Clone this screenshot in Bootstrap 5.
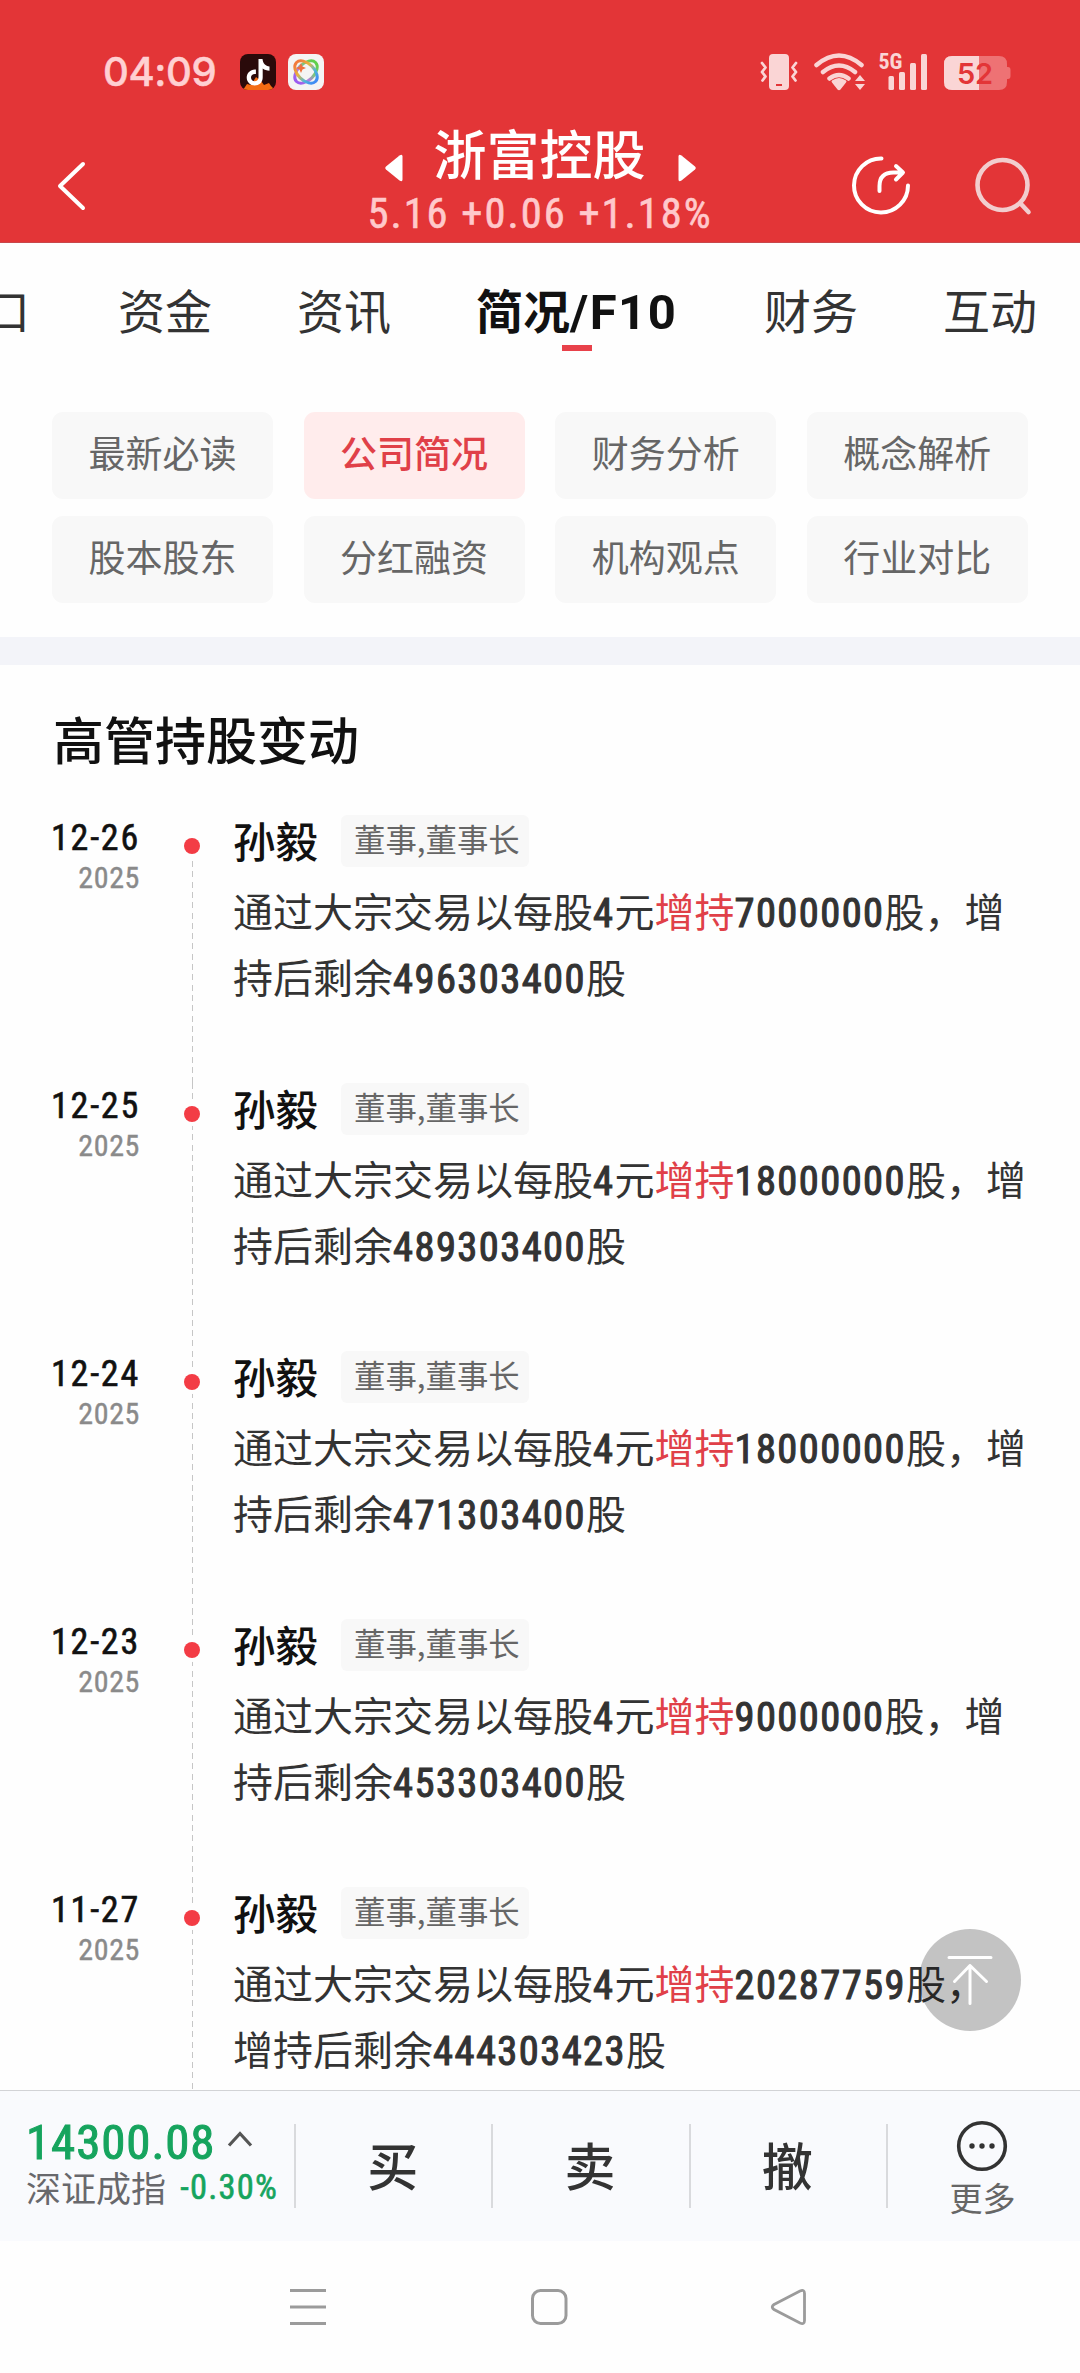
<!DOCTYPE html>
<html lang="zh-CN">
<head>
<meta charset="utf-8">
<meta name="viewport" content="width=device-width, initial-scale=1">
<title>浙富控股</title>
<link href="https://cdn.jsdelivr.net/npm/bootstrap@5.3.0/dist/css/bootstrap.min.css" rel="stylesheet">
<style>
  body { font-family: "Noto Sans CJK SC", "Noto Sans", sans-serif; background: #fefefe; color: #333; }
  .phone { width: 1080px; height: 2373px; background: #fefefe; }
  .num { font-family: "Roboto Condensed", Roboto, sans-serif; font-weight: 400; line-height: 1; -webkit-text-stroke: .6px currentColor; }
  .fw-mid { font-weight: 500; }

  .top-area { height: 243px; background: #e33537; border-bottom: 1px solid #c8474b; }
  .status-bar { height: 96px; padding: 48px 68px 0 103px; color: #ffd0d2; }
  .clock { font-family: Inter, sans-serif; font-weight: 500; font-size: 40px; line-height: 48px; width: 137px; letter-spacing: -.4px; -webkit-text-stroke: .5px currentColor; }
  .title-bar { height: 146px; padding: 0 44px 0 52px; }
  .headline { top: 25px; }
  .stock-name { font-size: 53px; line-height: 60px; color: #fff; }
  .quote { font-size: 42.5px; line-height: 42px; color: #ffc9cb; letter-spacing: 2px; white-space: pre; margin-top: 11px; }

  .tab-strip { height: 115px; gap: 85px; margin-left: -64px; font-size: 47px; line-height: 64px; padding-top: 34px; white-space: nowrap; }
  .tab-strip span:first-child { margin-right: 3px; }
  .tab-strip .now { color: #111; font-weight: 700; width: 203px; }
  .tab-strip .now::after { content: ""; display: block; width: 30px; height: 6px; background: #e8414a; margin: 4px auto 0; transform: translateX(-1px); }
  .tab-strip .num { font-family: Roboto, sans-serif; font-weight: 700; font-size: 49px; letter-spacing: 1.5px; -webkit-text-stroke: 0; }

  .chips { padding: 54px 52px 34px; display: grid; grid-template-columns: repeat(4, 221px); column-gap: 30.6px; row-gap: 17px; }
  .chip { height: 87px; border-radius: 11px; background: #f8f8f8; color: #666; font-size: 37px; line-height: 81px; text-align: center; }
  .chip.on { background: #ffecec; color: #e04048; font-weight: 500; }
  .band { height: 28px; background: #f3f4f9; }

  .feed { height: 1425px; }
  .feed-title { font-size: 51px; line-height: 60px; color: #111; padding: 43px 0 0 53px; height: 150px; }
  .entry { height: 268px; }
  .entry-date { width: 140px; padding-top: 9px; }
  .entry-date .day { font-size: 36px; line-height: 28px; color: #111; letter-spacing: 1.8px; }
  .entry-date .year { font-size: 30px; line-height: 28px; color: #8a8a8a; margin-top: 12px; letter-spacing: .6px; -webkit-text-stroke-width: .4px; }
  .rail { width: 93px; background: repeating-linear-gradient(to bottom, #c6c6c6 0 6px, transparent 6px 10.3px) 52px 0 / 1px 100% no-repeat; }
  .rail.start { background-position: 52px 46px; }
  .rail i { display: block; width: 16px; height: 16px; border-radius: 50%; background: #f33c45; margin: 23px 0 0 44px; box-shadow: 0 0 0 4px #fefefe; }
  .who { font-size: 42.500px; line-height: 50px; color: #111; }
  .role { height: 52px; border-radius: 6px; background: #f8f8f8; color: #666; font-size: 31.400px; line-height: 48px; padding: 0 12px 0 13px; margin-left: 23px; width: 188px; white-space: nowrap; }
  .act { font-size: 40px; line-height: 66.400px; color: #333; white-space: nowrap; margin-top: 10px; }
  .act .num { font-size: 40.500px; letter-spacing: 1.45px; -webkit-text-stroke-width: 1.1px; }
  .act em { font-style: normal; color: #e04048; }
  .to-top { left: 919px; top: 1929px; width: 102px; height: 102px; border-radius: 50%; background: rgba(0,0,0,.23); }

  .trade-bar { height: 151px; background: #f9fafd; border-top: 1px solid #d2d3d6; }
  .index-box { width: 294px; padding: 26px 0 0 26px; }
  .index-val { font-size: 49px; line-height: 52px; color: #16a45e; letter-spacing: .9px; -webkit-text-stroke-width: 1px; }
  .index-name { font-size: 35px; line-height: 36px; color: #68686c; }
  .index-pct { font-size: 34.500px; color: #16a45e; letter-spacing: 1.2px; }
  .trade-bar .cell { width: 197.300px; position: relative; font-size: 51px; line-height: 60px; padding-bottom: 5px; }
  .trade-bar .cell::before { content: ""; position: absolute; left: 0; top: 33px; width: 2px; height: 84px; background: #d9dadd; }
  .trade-bar .cell-more { width: 193px; }
  .more { font-size: 33px; line-height: 40px; color: #666; margin-top: 2px; }
  .sys-nav { height: 132px; padding: 45px 0 0 288px; }
</style>
</head>
<body>
<div class="phone position-relative overflow-hidden d-flex flex-column">

  <header class="top-area flex-shrink-0">
    <div class="status-bar d-flex align-items-start">
      <span class="clock">04:09</span>
      <svg width="84" height="48" viewBox="240 48 84 48">
        <defs>
          <linearGradient id="rb" gradientUnits="userSpaceOnUse" x1="293" y1="72" x2="319" y2="72"><stop offset="0" stop-color="#f27a3c"/><stop offset=".35" stop-color="#e8b53c"/><stop offset=".7" stop-color="#4fb8d8"/><stop offset="1" stop-color="#3f8cf5"/></linearGradient>
          <linearGradient id="rc" gradientUnits="userSpaceOnUse" x1="293" y1="72" x2="319" y2="72"><stop offset="0" stop-color="#9b5cf0"/><stop offset=".35" stop-color="#b27be0"/><stop offset=".65" stop-color="#7cc87a"/><stop offset="1" stop-color="#5ed04a"/></linearGradient>
          <clipPath id="tk"><rect x="240" y="54" width="36" height="36" rx="8"/></clipPath>
        </defs>
        <g clip-path="url(#tk)">
          <rect x="240" y="54" width="36" height="36" fill="#2a0a0a"/>
          <path d="M243 90l4-6 4 1 5-8 5 4 3 4 5-2 2 3 4 4z" fill="#f36b12"/>
        </g>
        <path d="M258.500 59h4c.4 4.500 3 7 7 7.400v4.300c-2.800 0-5-.9-6.800-2.200v9c0 5-3.700 8-8 8s-8-3.500-8-8 4-8.500 9.200-7.900v4.500c-2.700-.6-4.900 1-4.900 3.400s1.700 3.700 3.700 3.700 3.800-1.400 3.800-3.900z" fill="#fff"/>
        <rect x="288" y="54" width="36" height="36" rx="8" fill="#f4f4f4"/>
        <g fill="none" stroke-width="3">
          <ellipse cx="306" cy="72" rx="13.500" ry="8.300" transform="rotate(-45 306 72)" stroke="url(#rc)"/>
          <ellipse cx="306" cy="72" rx="13.500" ry="8.300" transform="rotate(45 306 72)" stroke="url(#rb)"/>
        </g>
        <path d="M301 63l1.500 3.500 3.500 1.500-3.500 1.500-1.500 3.500-1.500-3.500-3.500-1.500 3.500-1.500z" fill="#f0703c"/>
      </svg>
      <svg class="ms-auto" width="252" height="48" viewBox="760 48 252 48">
        <g fill="#fad5d5">
          <path fill-rule="evenodd" d="M773 54h12q4 0 4 4v28q0 4-4 4h-12q-4 0-4-4V58q0-4 4-4zm3 30v2h6v-2z"/>
          <path d="M832 79.500q7-5 14 0q1 1 0 2l-5.500 7q-1.500 1.500-3 0l-5.500-7q-1-1 0-2z" transform="translate(0 1)"/>
          <path d="M855 81l5-6 5 6zM855 84h10l-5 6z"/>
          <rect x="888.500" y="76" width="5.500" height="14" rx="1.500"/><rect x="899" y="72" width="6" height="18" rx="1.500"/><rect x="910" y="63" width="6" height="27" rx="1.500"/><rect x="921" y="54" width="6" height="36" rx="1.500"/>
          <text x="878.500" y="69" font-family="Roboto Condensed, sans-serif" font-weight="700" font-size="22" textLength="24">5G</text>
        </g>
        <g fill="none" stroke="#fad5d5" stroke-width="2.800" stroke-linecap="round" stroke-linejoin="round">
          <path d="M762 63l3.500 4.500-3.500 4.500 3.500 4.500-3 4M796 63l-3.500 4.500 3.500 4.500-3.500 4.500 3 4"/>
        </g>
        <g fill="none" stroke="#fad5d5" stroke-width="4.500" stroke-linecap="round">
          <path d="M816.500 65q22.500-19 45 0M823 72q16-13 32 0M829.500 78.500q9.500-7 19 0"/>
        </g>
        <path d="M952 56h47q8 0 8 8v3h1q2.500 0 2.500 3v6q0 3-2.500 3h-1v3q0 8-8 8h-47q-8 0-8-8V64q0-8 8-8z" fill="#ee7274"/>
        <path d="M952 56h27v34h-27q-8 0-8-8V64q0-8 8-8z" fill="#fad5d5"/>
        <text x="957" y="84" font-family="Inter, sans-serif" font-weight="600" font-size="29" textLength="36" fill="#e33537">52</text>
      </svg>
    </div>
    <div class="title-bar d-flex position-relative justify-content-between">
      <svg width="40" height="60" viewBox="52 156 40 60" style="margin-top:60px"><path d="M83 164L60 186l23 22" fill="none" stroke="#fff" stroke-width="4" stroke-linecap="round" stroke-linejoin="round"/></svg>
      <div class="headline position-absolute start-0 end-0 d-flex flex-column align-items-center">
        <div class="d-flex align-items-center">
          <svg width="18" height="28" viewBox="0 0 18 28" style="margin:33px 31px 0 0"><path d="M1 12.500L14.500 1.500q3-2 3 1v23q0 3-3 1L1 15.500q-1.500-1.500 0-3z" fill="#fff"/></svg>
          <span class="stock-name fw-mid">浙富控股</span>
          <svg width="18" height="28" viewBox="0 0 18 28" style="margin:33px 0 0 32px"><path d="M17 12.500L3.500 1.500q-3-2-3 1v23q0 3 3 1L17 15.500q1.500-1.500 0-3z" fill="#fff"/></svg>
        </div>
        <div class="quote num">5.16 +0.06 +1.18%</div>
      </div>
      <svg width="190" height="70" viewBox="846 150 190 70" style="margin-top:54px" fill="none" stroke-linecap="round" stroke-linejoin="round">
        <g stroke="#fff" stroke-width="4"><path d="M881.500 158.500A27 27 0 1 0 908 185.500M879.500 191v-5q0-13.500 14-13.500h9M896 166l7 6.500-7 7"/></g>
        <g stroke="#f2cdce" stroke-width="4.600"><circle cx="1002.500" cy="185" r="25"/><path d="M1021 204l7.500 8"/></g>
      </svg>
    </div>
  </header>

  <nav class="tab-strip d-flex flex-shrink-0">
    <span>盘口</span><span>资金</span><span>资讯</span><span class="now">简况<span class="num">/F10</span></span><span>财务</span><span>互动</span>
  </nav>

  <div class="chips flex-shrink-0">
    <div class="chip">最新必读</div><div class="chip on">公司简况</div><div class="chip">财务分析</div><div class="chip">概念解析</div>
    <div class="chip">股本股东</div><div class="chip">分红融资</div><div class="chip">机构观点</div><div class="chip">行业对比</div>
  </div>
  <div class="band flex-shrink-0"></div>

  <main class="feed flex-shrink-0 overflow-hidden">
    <h2 class="feed-title fw-mid m-0">高管持股变动</h2>
    <div class="entry d-flex">
      <div class="entry-date text-end"><div class="day num">12-26</div><div class="year num">2025</div></div>
      <div class="rail start"><i></i></div>
      <div><div class="d-flex"><span class="who fw-mid">孙毅</span><span class="role">董事,董事长</span></div>
      <div class="act">通过大宗交易以每股<span class="num">4</span>元<em>增持</em><span class="num">7000000</span>股，增<br>持后剩余<span class="num">496303400</span>股</div></div>
    </div>
    <div class="entry d-flex">
      <div class="entry-date text-end"><div class="day num">12-25</div><div class="year num">2025</div></div>
      <div class="rail"><i></i></div>
      <div><div class="d-flex"><span class="who fw-mid">孙毅</span><span class="role">董事,董事长</span></div>
      <div class="act">通过大宗交易以每股<span class="num">4</span>元<em>增持</em><span class="num">18000000</span>股，增<br>持后剩余<span class="num">489303400</span>股</div></div>
    </div>
    <div class="entry d-flex">
      <div class="entry-date text-end"><div class="day num">12-24</div><div class="year num">2025</div></div>
      <div class="rail"><i></i></div>
      <div><div class="d-flex"><span class="who fw-mid">孙毅</span><span class="role">董事,董事长</span></div>
      <div class="act">通过大宗交易以每股<span class="num">4</span>元<em>增持</em><span class="num">18000000</span>股，增<br>持后剩余<span class="num">471303400</span>股</div></div>
    </div>
    <div class="entry d-flex">
      <div class="entry-date text-end"><div class="day num">12-23</div><div class="year num">2025</div></div>
      <div class="rail"><i></i></div>
      <div><div class="d-flex"><span class="who fw-mid">孙毅</span><span class="role">董事,董事长</span></div>
      <div class="act">通过大宗交易以每股<span class="num">4</span>元<em>增持</em><span class="num">9000000</span>股，增<br>持后剩余<span class="num">453303400</span>股</div></div>
    </div>
    <div class="entry d-flex">
      <div class="entry-date text-end"><div class="day num">11-27</div><div class="year num">2025</div></div>
      <div class="rail"><i></i></div>
      <div><div class="d-flex"><span class="who fw-mid">孙毅</span><span class="role">董事,董事长</span></div>
      <div class="act">通过大宗交易以每股<span class="num">4</span>元<em>增持</em><span class="num">20287759</span>股，<br>增持后剩余<span class="num">444303423</span>股</div></div>
    </div>
  </main>

  <div class="trade-bar d-flex flex-shrink-0">
    <div class="index-box">
      <div class="d-flex"><span class="index-val num">14300.08</span>
        <svg width="26" height="18" viewBox="0 0 26 18" style="margin:13px 0 0 12px"><path d="M2 15.500L13 3.500l11 12" fill="none" stroke="#555" stroke-width="3.200"/></svg></div>
      <div class="d-flex align-items-center"><span class="index-name">深证成指</span><span class="index-pct num ms-auto me-3">-0.30%</span></div>
    </div>
    <div class="cell fw-mid d-flex align-items-center justify-content-center">买</div>
    <div class="cell fw-mid d-flex align-items-center justify-content-center">卖</div>
    <div class="cell fw-mid d-flex align-items-center justify-content-center">撤</div>
    <div class="cell cell-more d-flex flex-column align-items-center pt-4">
      <svg class="mt-1 flex-shrink-0" width="52" height="56" viewBox="-26 -27 52 56"><circle r="23.300" fill="none" stroke="#333" stroke-width="3.600"/><g fill="#333"><circle cx="-10" r="2.700"/><circle r="2.700"/><circle cx="10" r="2.700"/></g></svg>
      <span class="more">更多</span>
    </div>
  </div>

  <div class="sys-nav flex-shrink-0">
    <svg width="522" height="42" viewBox="288 2286 522 42" fill="none" stroke="#9b9b9b" stroke-width="3">
      <path d="M290 2290.500h36M290 2307h36M290 2323.500h36"/>
      <rect x="532.500" y="2290.500" width="33.500" height="33" rx="8"/>
      <path d="M774 2304.500L800 2291q4.500-2 4.500 2.500v27q0 4.500-4.500 2.500L774 2309.500q-3.500-2.500 0-5z" stroke-width="2.800"/>
    </svg>
  </div>

  <div class="to-top position-absolute">
    <svg width="102" height="102" viewBox="919 1929 102 102" fill="none" stroke="#fff" stroke-width="3" stroke-linecap="round" stroke-linejoin="round"><path d="M949 1957.500h42M970 1965.500v38M954.500 1981.500L970 1965.500l16.500 16"/></svg>
  </div>
</div>
<script src="https://cdn.jsdelivr.net/npm/bootstrap@5.3.0/dist/js/bootstrap.bundle.min.js"></script>
</body>
</html>
